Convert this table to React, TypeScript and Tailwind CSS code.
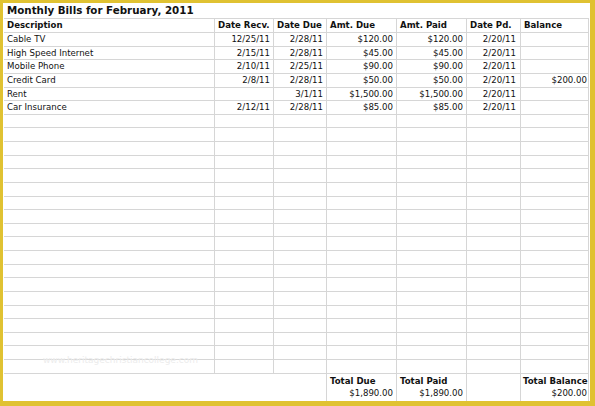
import React from "react"

type Bill = {
  description: string
  received: string
  due: string
  amountDue: string
  amountPaid: string
  paidOn: string
  balance: string
}

const bills: Bill[] = [
  { description: "Cable TV", received: "12/25/11", due: "2/28/11", amountDue: "$120.00", amountPaid: "$120.00", paidOn: "2/20/11", balance: "" },
  { description: "High Speed Internet", received: "2/15/11", due: "2/28/11", amountDue: "$45.00", amountPaid: "$45.00", paidOn: "2/20/11", balance: "" },
  { description: "Mobile Phone", received: "2/10/11", due: "2/25/11", amountDue: "$90.00", amountPaid: "$90.00", paidOn: "2/20/11", balance: "" },
  { description: "Credit Card", received: "2/8/11", due: "2/28/11", amountDue: "$50.00", amountPaid: "$50.00", paidOn: "2/20/11", balance: "$200.00" },
  { description: "Rent", received: "", due: "3/1/11", amountDue: "$1,500.00", amountPaid: "$1,500.00", paidOn: "2/20/11", balance: "" },
  { description: "Car Insurance", received: "2/12/11", due: "2/28/11", amountDue: "$85.00", amountPaid: "$85.00", paidOn: "2/20/11", balance: "" },
]

const TOTAL_ROWS = 25

const cols = "grid grid-cols-[211px_59px_53px_70px_70px_54px_68px]"
const cell = "border-r border-b border-[#d6d6d6] px-[3px] overflow-hidden whitespace-nowrap leading-none flex items-center"

function Row({ bill }: { bill?: Bill }) {
  const b = bill ?? { description: "", received: "", due: "", amountDue: "", amountPaid: "", paidOn: "", balance: "" }
  return (
    <div className={`${cols} h-[13.64px]`}>
      <div className={cell}>{b.description}</div>
      <div className={`${cell} justify-end`}>{b.received}</div>
      <div className={`${cell} justify-end`}>{b.due}</div>
      <div className={`${cell} justify-end`}>{b.amountDue}</div>
      <div className={`${cell} justify-end`}>{b.amountPaid}</div>
      <div className={`${cell} justify-end pr-[4px]`}>{b.paidOn}</div>
      <div className={`${cell} justify-end pr-[1px]`}>{b.balance}</div>
    </div>
  )
}

export default function App() {
  const rows: (Bill | undefined)[] = Array.from({ length: TOTAL_ROWS }, (_, i) => bills[i])

  return (
    <div
      className="relative w-[595px] h-[406px] bg-white border-[#e0c232] border-l-[3px] border-t-[3px] border-r-[5px] border-b-[5px] pl-px text-[8.6px] text-[#111]"
      style={{ fontFamily: '"DejaVu Sans", Verdana, sans-serif' }}
    >
      <div className="w-[585px]">
        <div className="h-[16px] border-b border-[#d6d6d6] px-[3px] flex items-center text-[10.3px] font-bold">
          Monthly Bills for February, 2011
        </div>
        <div className={`${cols} h-[14px] font-bold`}>
          <div className={cell}>Description</div>
          <div className={cell}>Date Recv.</div>
          <div className={cell}>Date Due</div>
          <div className={cell}>Amt. Due</div>
          <div className={cell}>Amt. Paid</div>
          <div className={`${cell} px-[1px]`}>Date Pd.</div>
          <div className={cell}>Balance</div>
        </div>
        {rows.map((bill, i) => (
          <Row key={i} bill={bill} />
        ))}
        <div className={`${cols} h-[27px]`}>
          <div className="col-span-3 border-r border-[#d6d6d6]" />
          <div className="border-r border-[#d6d6d6] px-[3px] pt-[3px] flex flex-col gap-[4px] leading-none">
            <span className="font-bold">Total Due</span>
            <span className="self-end">$1,890.00</span>
          </div>
          <div className="border-r border-[#d6d6d6] px-[3px] pt-[3px] flex flex-col gap-[4px] leading-none">
            <span className="font-bold">Total Paid</span>
            <span className="self-end">$1,890.00</span>
          </div>
          <div className="border-r border-[#d6d6d6]" />
          <div className="border-r border-[#d6d6d6] pl-[2px] pr-[1px] pt-[3px] flex flex-col gap-[4px] leading-none whitespace-nowrap">
            <span className="font-bold">Total Balance</span>
            <span className="self-end">$200.00</span>
          </div>
        </div>
      </div>
      <div className="absolute left-[40px] top-[353px] text-[9px] text-[#ececec] leading-none pointer-events-none">
        www.heritagechristiancollege.com
      </div>
    </div>
  )
}
